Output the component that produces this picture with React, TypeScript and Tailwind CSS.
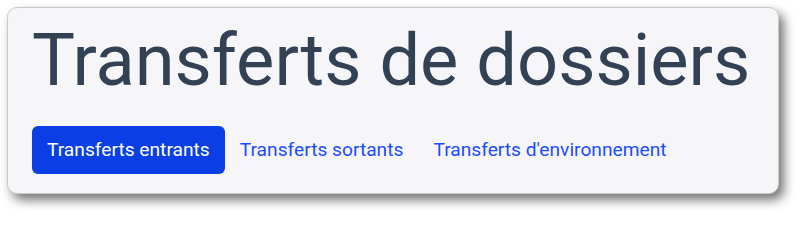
import React from "react";

export default function App() {
  const tabs = ["Transferts entrants", "Transferts sortants", "Transferts d'environnement"];
  return (
    <div className="bg-white p-[7px] w-[802px] h-[216px]" style={{ fontFamily: "Roboto, 'Liberation Sans', sans-serif" }}>
      <div className="w-[772px] rounded-[10px] border border-[#c9c9cc] bg-[#f6f6f9] px-6 pt-[17px] pb-[19px] shadow-[5px_6px_11px_rgba(0,0,0,0.55)]">
        <h1 className="text-[72.2px] leading-[72px] font-normal text-[#334155]">Transferts de dossiers</h1>
        <nav className="mt-[29px] flex">
          {tabs.map((t, i) => (
            <a
              key={t}
              href="#"
              className={
                i === 0
                  ? "rounded-[6px] bg-[#0a3fe6] px-[15px] py-3 text-[19.2px] leading-6 text-white"
                  : "px-[15px] py-3 text-[19.2px] leading-6 text-[#1c4cff]"
              }
            >
              {t}
            </a>
          ))}
        </nav>
      </div>
    </div>
  );
}
